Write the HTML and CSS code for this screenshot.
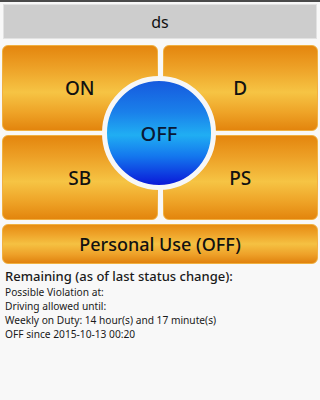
FILE: index.html
```html
<!DOCTYPE html>
<html>
<head>
<meta charset="utf-8">
<link rel="stylesheet" href="styles.css">
</head>
<body>
<div class="topstrip"></div>
<div class="header">ds</div>
<div class="board">
  <div class="grid">
    <div class="btn">ON</div>
    <div class="btn">D</div>
    <div class="btn">SB</div>
    <div class="btn">PS</div>
  </div>
  <div class="circle">OFF</div>
</div>
<div class="btn personal">Personal Use (OFF)</div>
<div class="info">
  <div class="heading">Remaining (as of last status change):</div>
  <div class="line">Possible Violation at:</div>
  <div class="line">Driving allowed until:</div>
  <div class="line">Weekly on Duty: 14 hour(s) and 17 minute(s)</div>
  <div class="line">OFF since 2015-10-13 00:20</div>
</div>
</body>
</html>
```
FILE: styles.css
```css
html, body {
  margin: 0;
  padding: 0;
  background: #f8f8f8;
  font-family: "Noto Sans", "Open Sans", sans-serif;
  color: #111;
  width: 320px;
  height: 400px;
  overflow: hidden;
}
.topstrip {
  height: 2px;
  background: #4a4a4a;
}
.header {
  margin: 2px 3px 0 3px;
  height: 33px;
  background: #cdcdcd;
  border: 1px solid #e2e2e2;
  display: flex;
  align-items: center;
  justify-content: center;
  font-size: 16px;
  color: #111;
}
.board {
  position: relative;
  margin: 6px 2px 0 2px;
}
.grid {
  display: grid;
  grid-template-columns: 1fr 1fr;
  grid-template-rows: 86px 85px;
  gap: 4px 5px;
}
.btn {
  display: flex;
  align-items: center;
  justify-content: center;
  border-radius: 6px;
  border: 1px solid #f0b040;
  background: linear-gradient(#e4860e 0%, #eda026 25%, #f6c444 55%, #eea226 80%, #e3850d 100%);
  font-size: 19px;
  font-weight: 500;
  color: #111;
  box-sizing: border-box;
}
.circle {
  position: absolute;
  left: 100px;
  top: 31px;
  width: 114px;
  height: 114px;
  box-sizing: border-box;
  border-radius: 50%;
  border: 5px solid #f7f7f7;
  background: linear-gradient(#165ade 0%, #1a80ea 30%, #20aef3 52%, #1478ee 72%, #0a18d8 100%);
  display: flex;
  align-items: center;
  justify-content: center;
  font-size: 20px;
  font-weight: 500;
  color: #0a1836;
}
.personal {
  margin: 4px 2px 0 2px;
  height: 40px;
  font-size: 18px;
  font-weight: 500;
  background: linear-gradient(#e68c12 0%, #efa42a 25%, #f5c142 50%, #eea028 78%, #e0820e 100%);
}
.info {
  padding: 3px 5px 0 5px;
  color: #1a1a1a;
}
.heading {
  font-size: 13px;
  font-weight: 500;
  line-height: 18px;
}
.line {
  font-size: 10.2px;
  line-height: 14px;
}
```
